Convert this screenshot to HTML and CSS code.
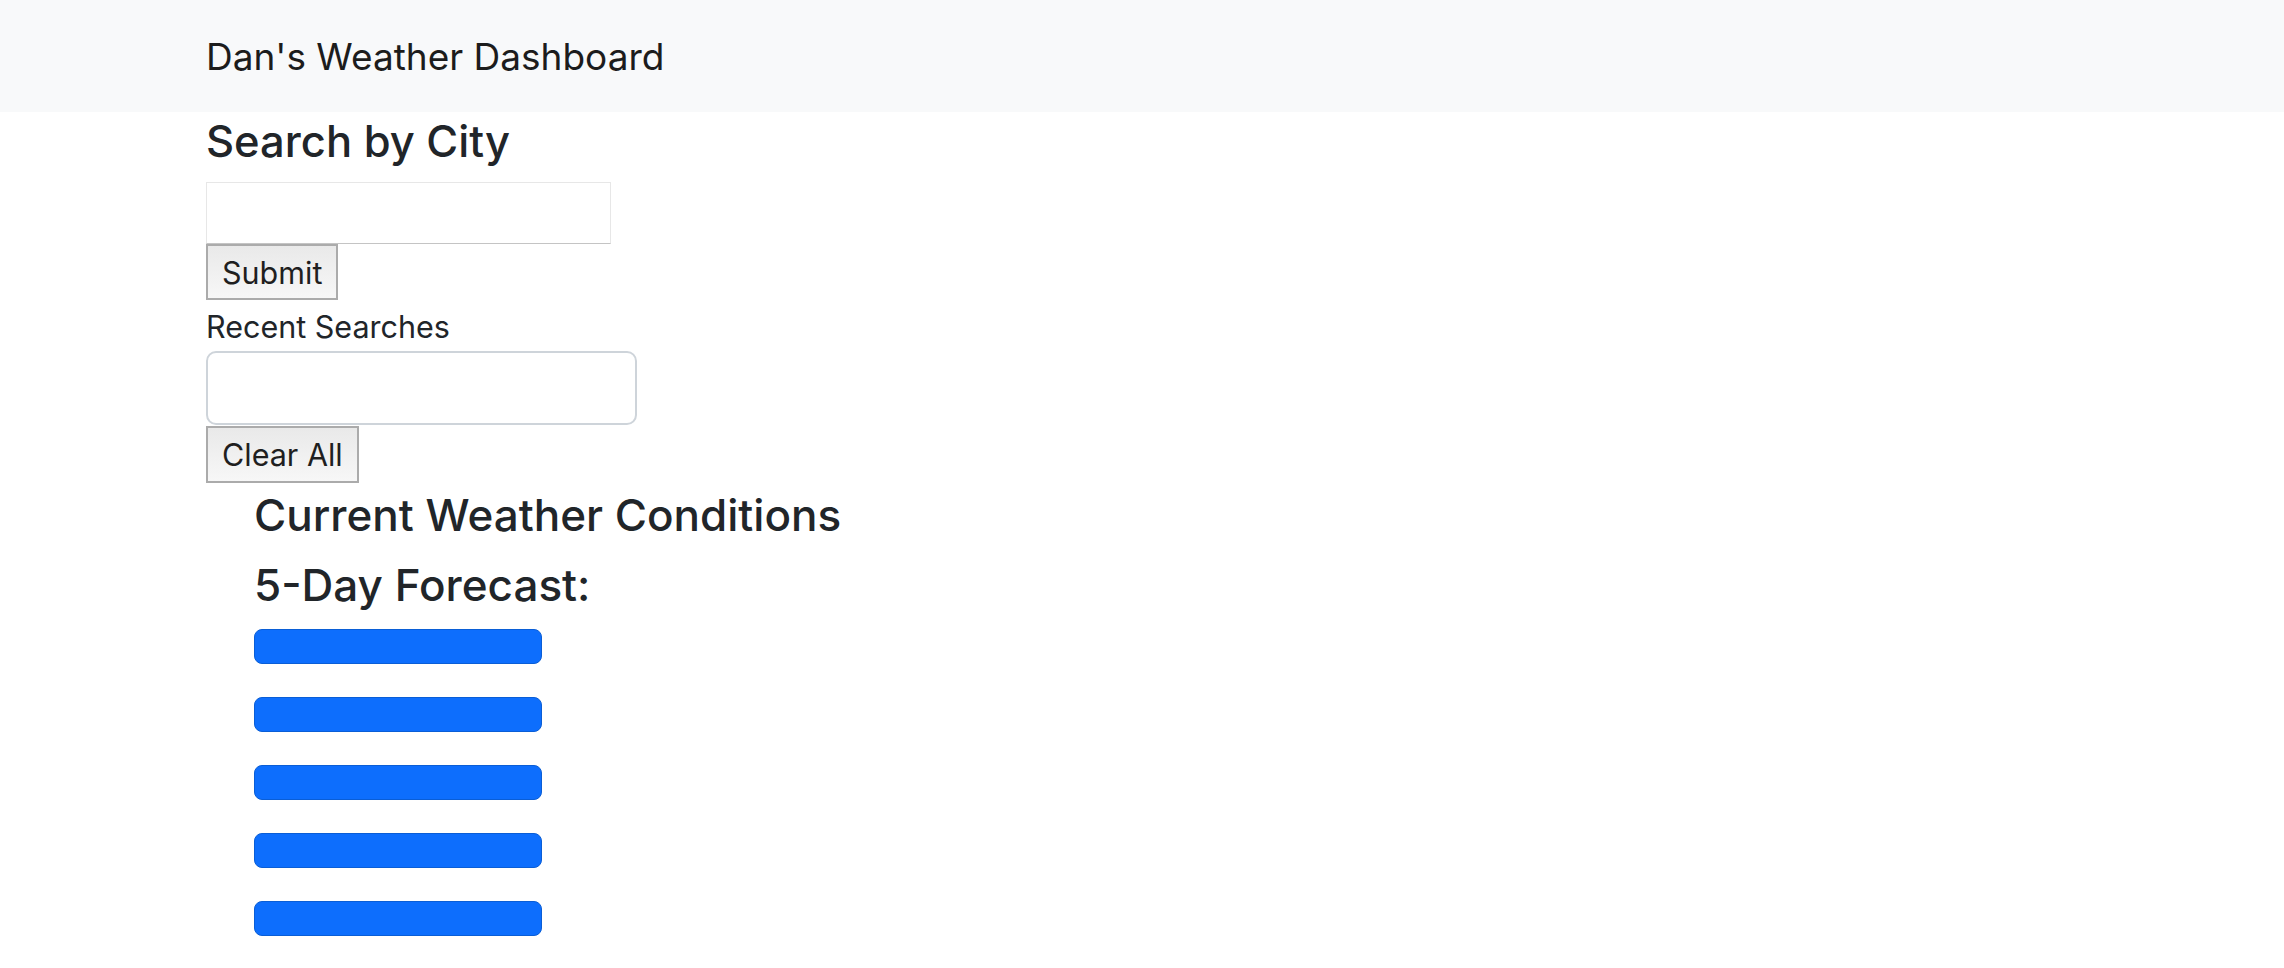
FILE: index.html
```html
<!DOCTYPE html>
<html lang="en">
<head>
<meta charset="utf-8">
<title>Dan's Weather Dashboard</title>
<link rel="stylesheet" href="styles.css">
</head>
<body>
<nav class="navbar">
  <div class="container">
    <span class="brand">Dan's Weather Dashboard</span>
  </div>
</nav>
<main class="container">
  <section class="search">
    <h4 class="search-title">Search by City</h4>
    <input class="city-input" type="text" aria-label="City">
    <button class="btn" type="button">Submit</button>
    <div class="recent-label">Recent Searches</div>
    <div class="recent-box"></div>
    <button class="btn btn-clear" type="button">Clear All</button>
  </section>
  <section class="weather">
    <h4 class="current-title">Current Weather Conditions</h4>
    <h4 class="forecast-title">5-Day Forecast:</h4>
    <div class="forecast">
      <div class="day-card"></div>
      <div class="day-card"></div>
      <div class="day-card"></div>
      <div class="day-card"></div>
      <div class="day-card"></div>
    </div>
  </section>
</main>
</body>
</html>
```

FILE: styles.css
```css
* { box-sizing: border-box; }

html, body {
  margin: 0;
  padding: 0;
  background: #ffffff;
}

body {
  font-family: Inter, "Liberation Sans", Arial, sans-serif;
  color: #212529;
  font-size: 31px;
}

.container {
  padding-left: 206px;
}

.navbar {
  background: #f8f9fa;
  height: 112px;
  display: flex;
  align-items: center;
}

.brand {
  font-size: 37px;
  line-height: 1.5;
  color: #1c1c1c;
  display: block;
  padding-top: 2px;
}

.search {
  display: flex;
  flex-direction: column;
  align-items: flex-start;
}

h4 {
  margin: 0;
  font-weight: 500;
  font-size: 44px;
}

.search-title {
  font-size: 43.5px;
  line-height: 58px;
  margin-bottom: 12px;
}

.city-input {
  width: 405px;
  height: 62px;
  border: 1px solid #e7e7e7;
  border-bottom-color: #c4c4c4;
  border-radius: 0;
  margin: 0;
  padding: 0 10px;
  background: #fff;
  font: inherit;
}

.btn {
  margin: 0;
  height: 56px;
  padding: 2px 14px 0;
  border: 2px solid #ababab;
  border-radius: 0;
  background: linear-gradient(#e9e9e9, #f7f7f7);
  color: #1f1f1f;
  font: inherit;
  font-size: 30.5px;
  line-height: 1;
}

.recent-label {
  height: 51px;
  line-height: 53px;
  font-size: 30.5px;
}

.recent-box {
  width: 431px;
  height: 74px;
  border: 2px solid #ced4da;
  border-radius: 10px;
  background: #fff;
}

.btn-clear {
  margin-top: 1px;
  height: 57px;
}

.weather {
  padding-left: 48px;
  display: flex;
  flex-direction: column;
  align-items: flex-start;
}

.current-title {
  line-height: 64px;
}

.forecast-title {
  line-height: 64px;
  margin-top: 6px;
}

.forecast {
  margin-top: 12px;
  display: flex;
  flex-direction: column;
  gap: 33px;
}

.day-card {
  width: 288px;
  height: 35px;
  background: #0d6efd;
  border: 1px solid #0a5ed6;
  border-radius: 8px;
}
```
